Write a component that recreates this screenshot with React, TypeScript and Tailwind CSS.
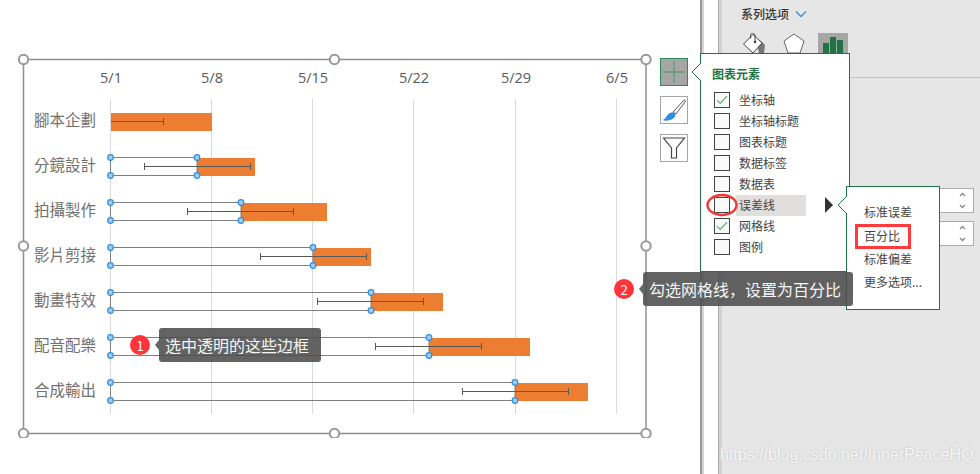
const rows = [
  { name: "腳本企劃", barStart: 111, barEnd: 212, errStart: 111, errEnd: 163.5, outline: false },
  { name: "分鏡設計", barStart: 197, barEnd: 255, errStart: 144.5, errEnd: 250.5, outline: true },
  { name: "拍攝製作", barStart: 241, barEnd: 327, errStart: 187.5, errEnd: 293.5, outline: true },
  { name: "影片剪接", barStart: 313, barEnd: 371, errStart: 260.5, errEnd: 366.5, outline: true },
  { name: "動畫特效", barStart: 371, barEnd: 443, errStart: 317.5, errEnd: 423.5, outline: true },
  { name: "配音配樂", barStart: 429, barEnd: 530, errStart: 375.5, errEnd: 481.5, outline: true },
  { name: "合成輸出", barStart: 515, barEnd: 588, errStart: 462.5, errEnd: 568.5, outline: true },
];
const ticks = [
  { x: 110.5, label: "5/1" },
  { x: 211.5, label: "5/8" },
  { x: 312.5, label: "5/15" },
  { x: 413.5, label: "5/22" },
  { x: 515.5, label: "5/29" },
  { x: 616.5, label: "6/5" },
];
const frameHandles = [
  [23.5, 59.5], [334.5, 59.5], [646, 59.5],
  [23.5, 246], [646, 246],
  [23.5, 433.5], [334.5, 433.5], [646, 433.5],
];
const menuItems = [
  { label: "坐标轴", checked: true },
  { label: "坐标轴标题" },
  { label: "图表标题" },
  { label: "数据标签" },
  { label: "数据表" },
  { label: "误差线", active: true },
  { label: "网格线", checked: true },
  { label: "图例" },
];

function Chart() {
  return (
    <svg width="634" height="384" viewBox="18 54 634 384" className="block flex-none">
      <rect x="23.5" y="59.5" width="622.5" height="374" fill="#fff" stroke="#8e8e8e" strokeWidth="1.5" />
      {ticks.map((t) => (
        <g key={t.label}>
          <line x1={t.x} x2={t.x} y1="99" y2="414" stroke="#d9d9d9" />
          <text x={t.x + 0.5} y="83" textAnchor="middle" fontSize="14.5" fill="#595959" fontFamily="'Open Sans', sans-serif">
            {t.label}
          </text>
        </g>
      ))}
      {rows.map((r, i) => {
        const top = 113 + i * 45;
        const mid = top + 8.5;
        return (
          <g key={r.name}>
            <text x="34" y={top + 13} fontSize="15.5" fill="#717171" fontFamily="'Noto Sans CJK TC', sans-serif">
              {r.name}
            </text>
            <rect x={r.barStart} y={top} width={r.barEnd - r.barStart} height="18" fill="#ed7d31" />
            {r.outline && (
              <rect x="110.5" y={top - 0.5} width={r.barStart - 110.5} height="18" fill="none" stroke="#7f7f7f" />
            )}
            <path
              d={`M${r.errStart} ${mid}H${r.errEnd}M${r.errEnd} ${mid - 3.5}V${mid + 3.5}${i === 0 ? "" : `M${r.errStart} ${mid - 3.5}V${mid + 3.5}`}`}
              stroke="#595959"
              fill="none"
            />
            {r.outline &&
              [110.5, r.barStart].flatMap((x) => [top - 0.5, top + 17.5].map((y) => (
                <circle key={`${x}-${y}`} cx={x} cy={y} r="2.8" fill="#9dcdf3" stroke="#2e8ee0" strokeWidth="1.2" />
              )))}
          </g>
        );
      })}
      {frameHandles.map(([x, y]) => (
        <circle key={`${x}-${y}`} cx={x} cy={y} r="4.7" fill="#fff" stroke="#999" strokeWidth="2" />
      ))}
    </svg>
  );
}

function Check({ checked }: { checked?: boolean }) {
  return (
    <span className="mt-[2px] flex h-[16px] w-[16px] flex-none items-center justify-center border border-[#444] bg-[#fafafa]">
      {checked && (
        <svg width="12" height="10" viewBox="0 0 12 10">
          <path d="M1 5.2 4.2 8.4 11 1.2" fill="none" stroke="#4caf6a" strokeWidth="1.1" />
        </svg>
      )}
    </span>
  );
}

function Notch({ className }: { className: string }) {
  return (
    <svg width="10" height="20" viewBox="0 0 10 20" className={className}>
      <path d="M10 1 1 10 10 19" fill="#fff" stroke="#217346" />
    </svg>
  );
}

function Tip({ n, text, className }: { n: number; text: string; className: string }) {
  return (
    <div className={`absolute flex items-center ${className}`}>
      <span className="flex h-[20px] w-[20px] flex-none items-center justify-center rounded-full bg-[#ff3338] text-[13px] leading-none text-white">
        {n}
      </span>
      <span className="ml-[5px] h-0 w-0 border-y-[5px] border-r-[4px] border-y-transparent border-r-[#666]" />
      <span className="flex h-[34px] items-center rounded-[3px] bg-[#4d4d4d]/88 pl-[6px] pr-[12px] text-[16px] text-[#f5f5f5] [font-family:'Noto_Sans_CJK_SC',sans-serif]">
        {text}
      </span>
    </div>
  );
}

function Spinner() {
  return (
    <div className="flex h-[25px] w-[35px] flex-col items-end justify-between border border-[#acacac] bg-white py-[3px] pr-[7px] text-[#8a8a8a]">
      <svg width="7" height="5" viewBox="0 0 7 5"><path d="M1 4 3.5 1.5 6 4" fill="none" stroke="currentColor" strokeWidth="1.3" /></svg>
      <svg width="7" height="5" viewBox="0 0 7 5"><path d="M1 1 3.5 3.5 6 1" fill="none" stroke="currentColor" strokeWidth="1.3" /></svg>
    </div>
  );
}

export default function App() {
  return (
    <div className="relative flex h-[474px] w-[980px] overflow-hidden bg-white [font-family:'Noto_Sans_CJK_SC',sans-serif]">
      <div className="flex w-[700px] flex-none items-start pl-[18px] pt-[54px]">
        <Chart />
        <div className="ml-[8px] mt-[4px] flex flex-col gap-[10px]">
          <div className="flex h-[28px] w-[28px] items-center justify-center border border-[#2f8a5a] bg-[#a6a6a6]">
            <svg width="22" height="22" viewBox="0 0 22 22">
              <path d="M11 0V22M0 11H22" stroke="#3f9a62" strokeWidth="1" />
            </svg>
          </div>
          <div className="flex h-[28px] w-[28px] items-center justify-center border border-[#a6a6a6] bg-white">
            <svg width="26" height="26" viewBox="0 0 26 26">
              <path d="M12 15 22.5 3.5C23.5 2.5 25 3.5 24 5L15 17Z" fill="#fff" stroke="#555" strokeWidth="1" />
              <path d="M1.5 23C5 22 5 19 7.5 17 9.5 15 12.5 15 14 17 15 18.5 13.5 21 11.5 22 8 24 4 24 1.5 23Z" fill="#2e8ee0" />
            </svg>
          </div>
          <div className="flex h-[28px] w-[28px] items-center justify-center border border-[#a6a6a6] bg-white">
            <svg width="24" height="24" viewBox="0 0 24 24">
              <path d="M1.5 2H22.5L14.5 12V22H9.5V12Z" fill="#fff" stroke="#444" strokeWidth="1.2" />
            </svg>
          </div>
        </div>
      </div>

      <div className="h-full w-[4px] flex-none [background:linear-gradient(90deg,#999_0,#999_2px,#d6d6d6_2px,#d6d6d6_4px)]" />
      <div className="w-[14px] flex-none bg-white" />
      <div className="h-full w-[4px] flex-none [background:linear-gradient(90deg,#aaa_0,#aaa_1px,#d2d2d2_1px,#d2d2d2_4px)]" />

      <div className="flex flex-1 flex-col bg-[#e6e6e6]">
        <div className="h-[78px] flex-none border-b border-[#c4c4c4]">
          <div className="flex items-center pl-[19px] pt-[5px] text-[12px] font-medium leading-[18px] text-[#333]">
            系列选项
            <svg width="12" height="8" viewBox="0 0 12 8" className="ml-[6px]">
              <path d="M1 1.5 6 6.5 11 1.5" fill="none" stroke="#3b8fd6" strokeWidth="1.3" />
            </svg>
          </div>
          <div className="mt-[10px] flex items-start pl-[20px]">
            <svg width="26" height="20" viewBox="0 0 26 20">
              <path d="M13 4 19 8 23 12 22 20H17Z" fill="#777" />
              <path d="M11 1.5 20 10 11 20 1.5 11Z" fill="#fff" stroke="#444" />
              <path d="M8.5 5.5V2.5C8.5 -0.5 13 -0.5 13 2.5V8" fill="none" stroke="#444" />
              <circle cx="13" cy="9" r="1.3" fill="#444" />
            </svg>
            <svg width="22" height="20" viewBox="0 0 22 20" className="ml-[15px]">
              <path d="M11 1 21 8 17 20H5L1 8Z" fill="#fff" stroke="#666" />
            </svg>
            <div className="ml-[13px] flex h-[20px] w-[30px] items-end justify-center gap-[1px] bg-[#a6a6a6]">
              <span className="h-[10px] w-[6px] bg-[#217346]" />
              <span className="h-[16px] w-[6px] bg-[#217346]" />
              <span className="h-[13px] w-[6px] bg-[#217346]" />
            </div>
          </div>
        </div>
        <div className="mt-[110px] flex flex-col items-end gap-[8px] pr-[6px]">
          <Spinner />
          <Spinner />
        </div>
        <div className="mt-auto pb-[9px] text-[16px] leading-[20px] text-[#f7f7f7] [font-family:'Liberation_Sans',sans-serif] [text-shadow:0_0_2px_#bdbdbd]">
          <span className="ml-[-2px] block whitespace-nowrap">https://blog.csdn.net/InnerPeaceHQ</span>
        </div>
      </div>

      {/* chart elements flyout */}
      <div className="absolute left-[700px] top-[53px] h-[219px] w-[150px] border border-[#217346] bg-white pl-[11px] pt-[11px] text-[12px] text-[#444]">
        <div className="text-[12px] font-bold leading-[18px] text-[#217346]">图表元素</div>
        <div className="mt-[7px] flex flex-col">
          {menuItems.map((m) => (
            <div key={m.label} className="flex h-[21px] items-start pl-[2px]">
              <Check checked={m.checked} />
              <span className={`ml-[6px] flex h-[21px] w-[70px] items-center pb-[2px] pl-[3px] leading-none ${m.active ? "bg-[#e0dfdd]" : ""}`}>
                {m.label}
              </span>
            </div>
          ))}
        </div>
      </div>
      <Notch className="absolute left-[691px] top-[62px] z-10" />
      <span className="absolute left-[825px] top-[197px] h-0 w-0 border-y-[8px] border-l-[8px] border-y-transparent border-l-[#333]" />

      {/* error bar sub menu */}
      <div className="absolute left-[846px] top-[186px] flex h-[124px] w-[94px] flex-col items-start border border-[#217346] bg-white pl-[17px] pt-[13px] text-[12px] leading-[23.5px] text-[#444]">
        <span>标准误差</span>
        <span>百分比</span>
        <span>标准偏差</span>
        <span className="-mt-[1px]">更多选项...</span>
      </div>
      <Notch className="absolute left-[837px] top-[195px] z-10" />
      <div className="absolute left-[855px] top-[224px] h-[25px] w-[56px] border-[3px] border-[#ff3b3b]" />

      {/* red ring on checkbox */}
      <svg width="34" height="26" viewBox="0 0 34 26" className="absolute left-[705px] top-[192px]">
        <ellipse cx="17" cy="13" rx="14.5" ry="10" fill="none" stroke="#f03a3a" strokeWidth="2.5" />
      </svg>

      <Tip n={1} text="选中透明的这些边框" className="left-[130px] top-[328px]" />
      <Tip n={2} text="勾选网格线，设置为百分比" className="left-[614px] top-[272px]" />
    </div>
  );
}
